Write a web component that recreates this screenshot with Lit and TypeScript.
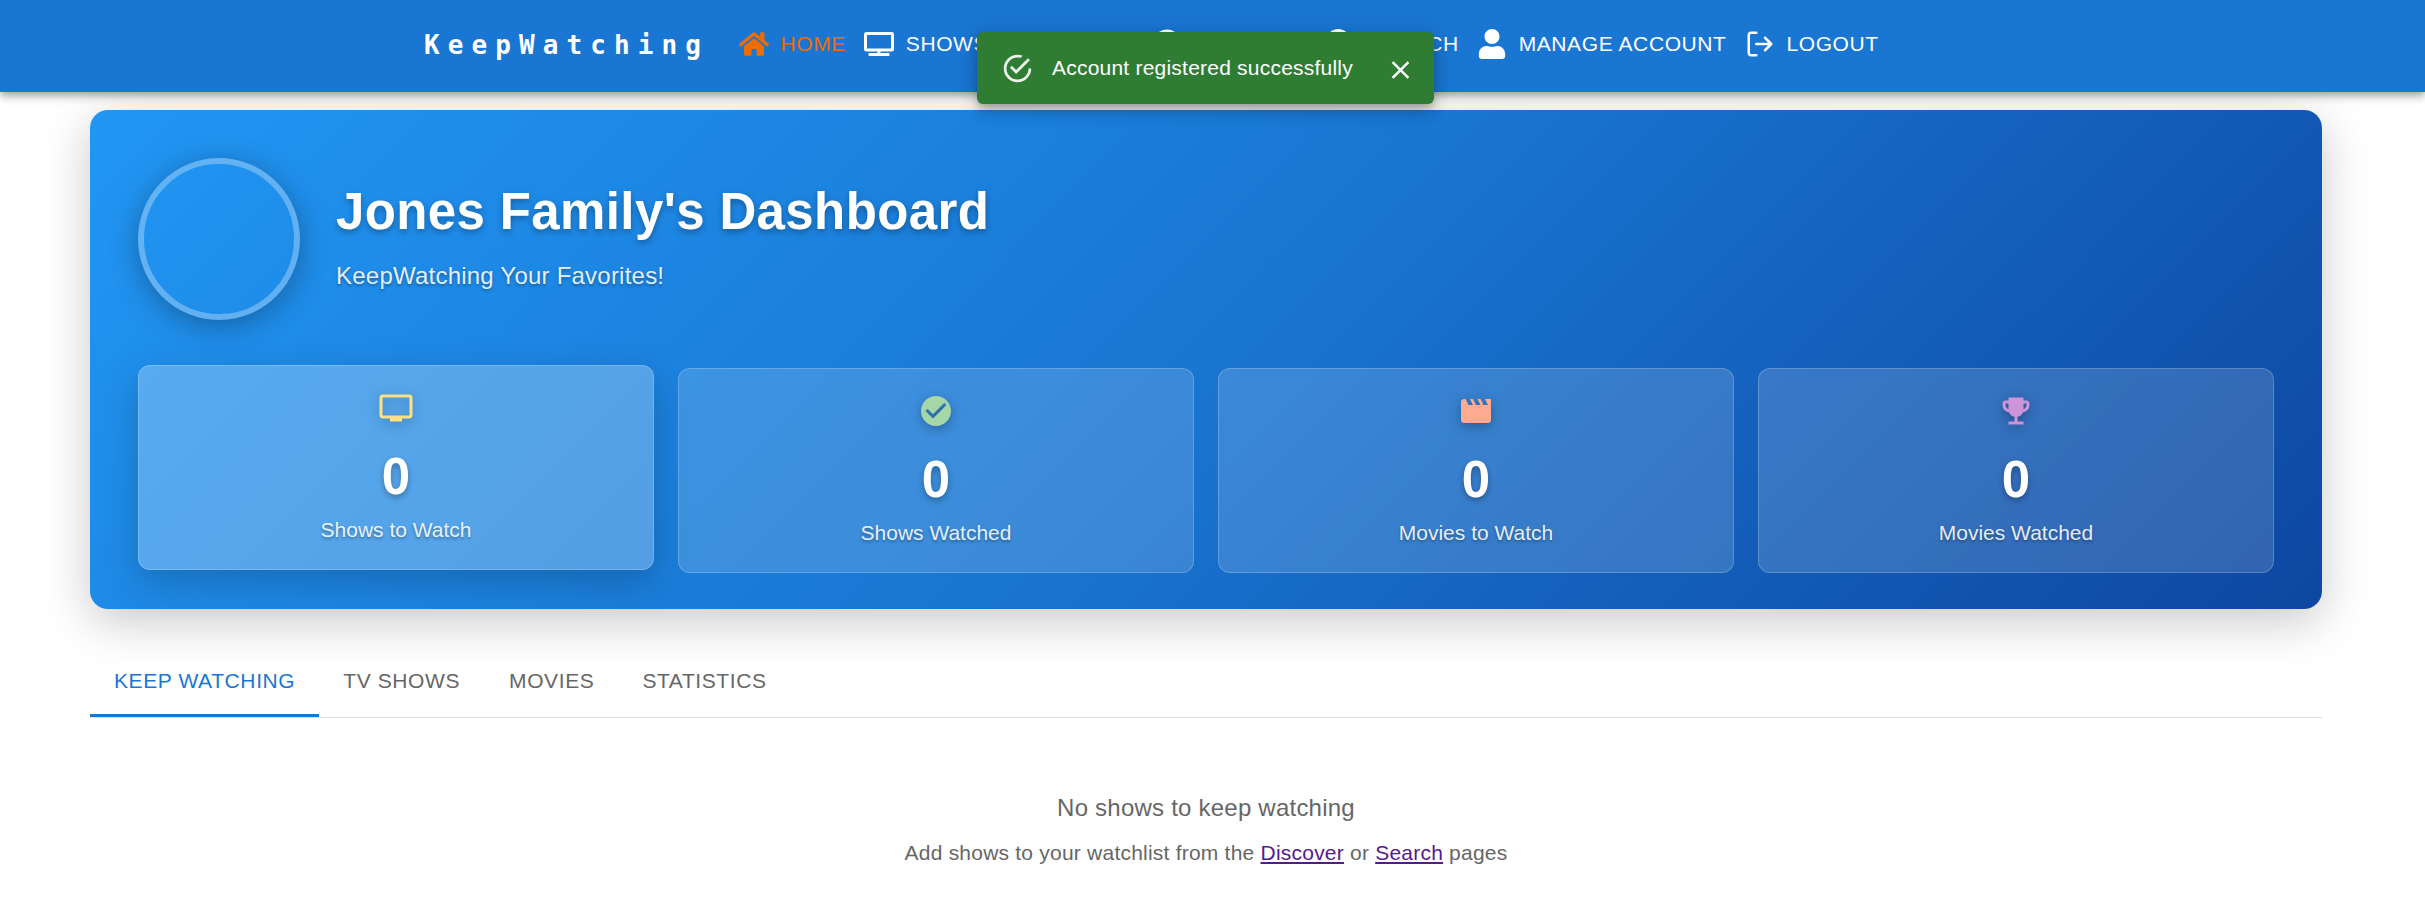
import { LitElement, html, css, svg } from "lit";
import { customElement } from "lit/decorators.js";

const navIcons = {
  home: svg`<path d="M280.37 148.26L96 300.11V464a16 16 0 0 0 16 16l112.06-.29a16 16 0 0 0 15.92-16V368a16 16 0 0 1 16-16h64a16 16 0 0 1 16 16v95.64a16 16 0 0 0 16 16.05L464 480a16 16 0 0 0 16-16V300L295.67 148.26a12.19 12.19 0 0 0-15.3 0zM571.6 251.47L488 182.56V44.05a12 12 0 0 0-12-12h-56a12 12 0 0 0-12 12v72.61L318.47 43a48 48 0 0 0-61 0L4.34 251.47a12 12 0 0 0-1.6 16.9l25.5 31A12 12 0 0 0 45.15 301l235.22-193.74a12.19 12.19 0 0 1 15.3 0L530.9 301a12 12 0 0 0 16.9-1.6l25.5-31a12 12 0 0 0-1.7-16.93z"/>`,
  tv: svg`<path d="M592 0H48A48 48 0 0 0 0 48v320a48 48 0 0 0 48 48h240v32H112a16 16 0 0 0-16 16v32a16 16 0 0 0 16 16h416a16 16 0 0 0 16-16v-32a16 16 0 0 0-16-16H352v-32h240a48 48 0 0 0 48-48V48a48 48 0 0 0-48-48zm-16 352H64V64h512z"/>`,
  film: svg`<path fill-rule="evenodd" d="M24 64h464a24 24 0 0 1 24 24v336a24 24 0 0 1-24 24H24a24 24 0 0 1-24-24V88a24 24 0 0 1 24-24zm20 50v44h56v-44zm0 120v44h56v-44zm0 120v44h56v-44zm368-240v44h56v-44zm0 120v44h56v-44zm0 120v44h56v-44zM144 112v120h224V112zm0 168v120h224V280z"/>`,
  compass: svg`<path d="M225.38 233.37c-12.5 12.5-12.5 32.76 0 45.25 12.49 12.5 32.76 12.5 45.25 0 12.5-12.5 12.5-32.76 0-45.25-12.5-12.49-32.76-12.49-45.25 0zM248 8C111.03 8 0 119.03 0 256s111.03 248 248 248 248-111.03 248-248S384.97 8 248 8zm126.14 148.05L308.17 300.4a31.938 31.938 0 0 1-15.77 15.77l-144.34 65.97c-16.65 7.61-33.81-9.55-26.2-26.2l65.98-144.35a31.938 31.938 0 0 1 15.77-15.77l144.34-65.97c16.65-7.6 33.8 9.55 26.19 26.2z"/>`,
  search: svg`<path d="M505 442.7L405.3 343c-4.5-4.5-10.6-7-17-7H372c27.6-35.3 44-79.7 44-128C416 93.1 322.9 0 208 0S0 93.1 0 208s93.1 208 208 208c48.3 0 92.7-16.4 128-44v16.3c0 6.4 2.5 12.5 7 17l99.7 99.7c9.4 9.4 24.6 9.4 33.9 0l28.3-28.3c9.4-9.4 9.4-24.6.1-34zM208 336c-70.7 0-128-57.2-128-128 0-70.7 57.2-128 128-128 70.7 0 128 57.2 128 128 0 70.7-57.2 128-128 128z"/>`,
  user: svg`<path d="M224 256c70.7 0 128-57.3 128-128S294.7 0 224 0 96 57.3 96 128s57.3 128 128 128zm89.6 32h-16.7c-22.2 10.2-46.9 16-72.9 16s-50.6-5.8-72.9-16h-16.7C60.2 288 0 348.2 0 422.4V464c0 26.5 21.5 48 48 48h352c26.5 0 48-21.5 48-48v-41.6c0-74.2-60.2-134.4-134.4-134.4z"/>`,
  logout: svg`<path fill="none" stroke="currentColor" stroke-width="2" stroke-linecap="round" stroke-linejoin="round" d="M9 21H5a2 2 0 0 1-2-2V5a2 2 0 0 1 2-2h4M16 17l5-5-5-5M21 12H9"/>`,
};

const navItems = [
  { label: "HOME", icon: navIcons.home, box: "0 0 576 512", active: true },
  { label: "SHOWS", icon: navIcons.tv, box: "0 0 640 512" },
  { label: "MOVIES", icon: navIcons.film, box: "0 0 512 512" },
  { label: "DISCOVER", icon: navIcons.compass, box: "0 0 496 512" },
  { label: "SEARCH", icon: navIcons.search, box: "0 0 512 512" },
  { label: "MANAGE ACCOUNT", icon: navIcons.user, box: "0 0 448 512" },
  { label: "LOGOUT", icon: navIcons.logout, box: "0 0 24 24" },
];

const stats = [
  {
    label: "Shows to Watch",
    tone: "yellow",
    raised: true,
    d: "M21 3H3c-1.1 0-2 .9-2 2v12c0 1.1.9 2 2 2h5v2h8v-2h5c1.1 0 1.99-.9 1.99-2L23 5c0-1.1-.9-2-2-2m0 14H3V5h18z",
  },
  {
    label: "Shows Watched",
    tone: "green",
    d: "M12 2C6.48 2 2 6.48 2 12s4.48 10 10 10 10-4.48 10-10S17.52 2 12 2m-2 15-5-5 1.41-1.41L10 14.17l7.59-7.59L19 8z",
  },
  {
    label: "Movies to Watch",
    tone: "coral",
    d: "m18 4 2 4h-3l-2-4h-2l2 4h-3l-2-4H8l2 4H7L5 4H4c-1.1 0-1.99.9-1.99 2L2 18c0 1.1.9 2 2 2h16c1.1 0 2-.9 2-2V4z",
  },
  {
    label: "Movies Watched",
    tone: "purple",
    d: "M19 5h-2V3H7v2H5c-1.1 0-2 .9-2 2v1c0 2.55 1.92 4.63 4.39 4.94.63 1.5 1.98 2.63 3.61 2.96V19H7v2h10v-2h-4v-3.1c1.63-.33 2.98-1.46 3.61-2.96C19.08 12.63 21 10.55 21 8V7c0-1.1-.9-2-2-2M5 8V7h2v3.82C5.84 10.4 5 9.3 5 8m14 0c0 1.3-.84 2.4-2 2.82V7h2z",
  },
];

@customElement("app-nav")
class AppNav extends LitElement {
  static styles = css`
    :host { display: block; }
    .bar {
      box-sizing: border-box;
      height: 92px;
      padding: 0 0 4px 424px;
      display: flex;
      align-items: center;
      background: #1976d2;
      color: #fff;
      box-shadow: 0 3px 6px -1.5px rgba(0,0,0,.2), 0 6px 7.5px rgba(0,0,0,.14), 0 1.5px 15px rgba(0,0,0,.12);
    }
    .brand {
      width: 315px;
      flex: none;
      box-sizing: border-box;
      padding: 1px 0 0;
      font: 700 26px/40px "DejaVu Sans Mono", monospace;
      letter-spacing: 8.1px;
      white-space: nowrap;
    }
    .item {
      display: flex;
      align-items: center;
      gap: 11.5px;
      margin-right: 18.4px;
      font-size: 21px;
      letter-spacing: .6px;
      white-space: nowrap;
    }
    .active { color: #ef6c00; }
    .icon { width: 30px; height: 30px; fill: currentColor; flex: none; }
  `;
  render() {
    return html`<header class="bar">
      <div class="brand">KeepWatching</div>
      ${navItems.map(
        (n) => html`<a class="item ${n.active ? "active" : ""}">
          <svg class="icon" viewBox=${n.box}>${n.icon}</svg><span>${n.label}</span></a>`
      )}
    </header>`;
  }
}

@customElement("app-toast")
class AppToast extends LitElement {
  static styles = css`
    :host { display: block; }
    .toast {
      box-sizing: border-box;
      width: 457px;
      height: 72px;
      padding: 0 11px 0 24px;
      display: flex;
      align-items: center;
      border-radius: 6px;
      background: #2e7d32;
      color: #fff;
      font-size: 21px;
      letter-spacing: .22px;
      box-shadow: 0 4.5px 7.5px -1.5px rgba(0,0,0,.2), 0 9px 15px rgba(0,0,0,.14), 0 1.5px 27px rgba(0,0,0,.12);
    }
    .icon { width: 33px; height: 33px; fill: currentColor; opacity: .9; margin-right: 18px; }
    .text { flex: 1; white-space: nowrap; }
    .close { width: 30px; height: 30px; fill: currentColor; padding: 11px 7.5px 7px; }
  `;
  render() {
    return html`<div class="toast">
      <svg class="icon" viewBox="0 0 24 24"><path d="M20,12A8,8 0 0,1 12,20A8,8 0 0,1 4,12A8,8 0 0,1 12,4C12.76,4 13.5,4.11 14.2, 4.31L15.77,2.74C14.61,2.26 13.34,2 12,2A10,10 0 0,0 2,12A10,10 0 0,0 12,22A10,10 0 0,0 22,12M7.91,10.08L6.5,11.5L11,16L21,6L19.59,4.58L11,13.17L7.91,10.08Z"/></svg>
      <span class="text">Account registered successfully</span>
      <svg class="close" viewBox="0 0 24 24"><path d="M19 6.41L17.59 5 12 10.59 6.41 5 5 6.41 10.59 12 5 17.59 6.41 19 12 13.41 17.59 19 19 17.59 13.41 12z"/></svg>
    </div>`;
  }
}

@customElement("stat-card")
class StatCard extends LitElement {
  static properties = { stat: { attribute: false } };
  declare stat: any;
  static styles = css`
    :host { display: block; }
    .card {
      box-sizing: border-box;
      height: 205px;
      padding: 24px;
      display: flex;
      flex-direction: column;
      align-items: center;
      border: 1px solid rgba(255,255,255,.2);
      border-radius: 12px;
      background: rgba(255,255,255,.15);
      color: #fff;
    }
    .raised {
      transform: translateY(-3px);
      background: rgba(255,255,255,.25);
      box-shadow: 0 12px 36px rgba(0,0,0,.2);
    }
    .icon { width: 36px; height: 36px; fill: currentColor; filter: drop-shadow(0 3px 6px rgba(0,0,0,.3)); }
    .yellow { color: #ffe082; }
    .green { color: #a5d6a7; }
    .coral { color: #ffab91; }
    .purple { color: #ce93d8; }
    .value { margin-top: 19px; font-size: 51px; line-height: 63px; font-weight: 700; text-shadow: 0 3px 6px rgba(0,0,0,.3); }
    .label { margin-top: 7px; font-size: 21px; line-height: 30px; color: rgba(255,255,255,.9); text-shadow: 0 1.5px 3px rgba(0,0,0,.3); }
  `;
  render() {
    const s = this.stat;
    return html`<div class="card ${s.raised ? "raised" : ""}">
      <svg class="icon ${s.tone}" viewBox="0 0 24 24"><path d=${s.d}></path></svg>
      <div class="value">0</div>
      <div class="label">${s.label}</div>
    </div>`;
  }
}

@customElement("app-root")
class AppRoot extends LitElement {
  static styles = css`
    :host {
      display: block;
      position: relative;
      min-height: 919px;
      overflow: hidden;
      background: #fff;
      font-family: "Liberation Sans", Arial, sans-serif;
    }
    .nav { position: relative; z-index: 1; }
    .snackbar { position: absolute; z-index: 2; top: 32px; left: 977px; }
    .page { width: 2232px; margin: 18px 0 0 90px; }
    .hero {
      box-sizing: border-box;
      height: 499px;
      padding: 48px 48px 36px;
      border-radius: 18px;
      background: linear-gradient(135deg, #2196f3 0%, #1976d2 50%, #0d47a1 100%);
      box-shadow: 0 12px 48px rgba(0,0,0,.22);
      color: #fff;
    }
    .profile { display: flex; align-items: center; gap: 36px; }
    .heading { padding-bottom: 1px; }
    .avatar {
      box-sizing: border-box;
      width: 162px;
      height: 162px;
      border-radius: 50%;
      border: 6px solid rgba(255,255,255,.3);
      box-shadow: 0 6px 30px rgba(0,0,0,.3);
    }
    .title { margin: 0; font-size: 51px; line-height: 63px; font-weight: 700; letter-spacing: .375px; text-shadow: 0 3px 6px rgba(0,0,0,.3); }
    .subtitle { margin: 12px 0 0; font-size: 24px; line-height: 42px; letter-spacing: .225px; color: rgba(255,255,255,.9); text-shadow: 0 1.5px 3px rgba(0,0,0,.3); }
    .stats { display: grid; grid-template-columns: repeat(4, 1fr); gap: 24px; margin-top: 48px; }
    .tabs { display: flex; margin-top: 36px; border-bottom: 1px solid #e0e0e0; }
    .tab {
      box-sizing: border-box;
      height: 72px;
      padding: 3px 24px 0;
      display: flex;
      align-items: center;
      border-bottom: 3px solid transparent;
      font-size: 21px;
      letter-spacing: .6px;
      color: #666;
    }
    .tab:nth-child(2) { padding-right: 25px; }
    .selected { color: #1976d2; border-color: #1976d2; }
    .empty { padding-top: 69px; text-align: center; color: #666; }
    .empty-title { margin: 0; font-size: 24px; line-height: 42px; letter-spacing: .225px; }
    .empty-hint { margin: 9px 0 0; font-size: 21px; line-height: 30px; letter-spacing: .22px; }
    .link { color: #551a8b; text-decoration: underline; }
  `;
  render() {
    return html`
      <app-nav class="nav"></app-nav>
      <app-toast class="snackbar"></app-toast>
      <main class="page">
        <section class="hero">
          <div class="profile">
            <div class="avatar"></div>
            <div class="heading">
              <h1 class="title">Jones Family's Dashboard</h1>
              <p class="subtitle">KeepWatching Your Favorites!</p>
            </div>
          </div>
          <div class="stats">${stats.map((s) => html`<stat-card .stat=${s}></stat-card>`)}</div>
        </section>
        <nav class="tabs">
          ${["KEEP WATCHING", "TV SHOWS", "MOVIES", "STATISTICS"].map(
            (t, i) => html`<div class="tab ${i === 0 ? "selected" : ""}">${t}</div>`
          )}
        </nav>
        <section class="empty">
          <p class="empty-title">No shows to keep watching</p>
          <p class="empty-hint">Add shows to your watchlist from the <a class="link">Discover</a> or <a class="link">Search</a> pages</p>
        </section>
      </main>
    `;
  }
}
